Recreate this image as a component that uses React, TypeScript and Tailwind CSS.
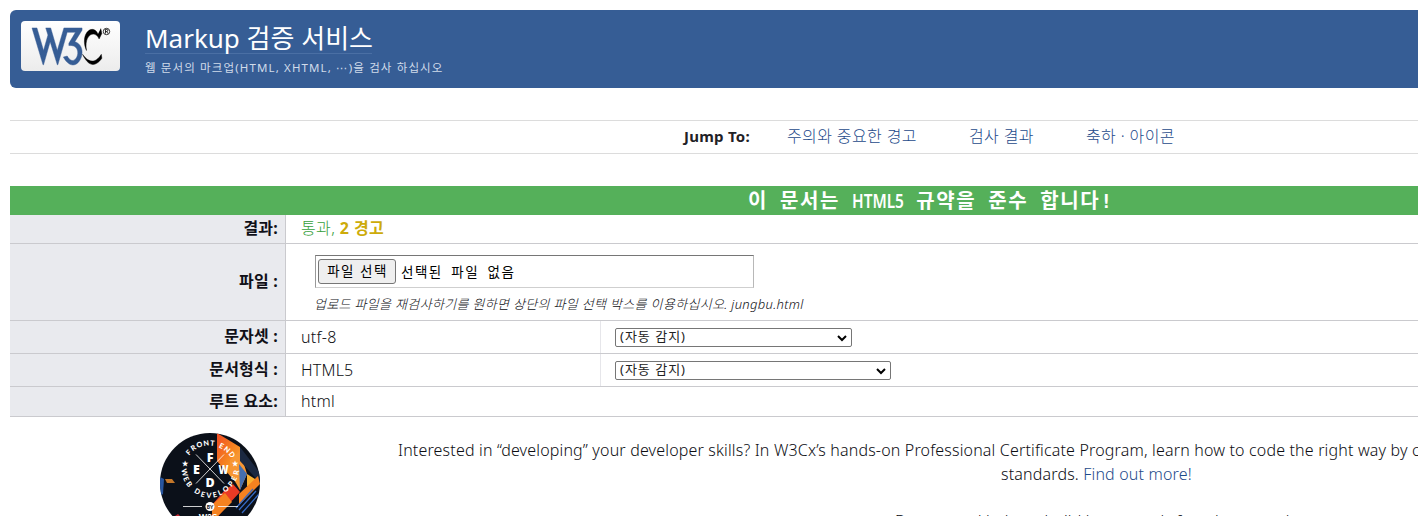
import React from "react";

const W3CLogo = () => (
  <svg className="block h-[50px] w-[99px] shrink-0" viewBox="0 0 99 50" aria-label="W3C">
    <defs>
      <linearGradient id="plate" x1="0" y1="0" x2="0" y2="1">
        <stop offset="0" stopColor="#fff" />
        <stop offset="1" stopColor="#ececec" />
      </linearGradient>
    </defs>
    <rect width="99" height="50" rx="4" fill="url(#plate)" />
    <g transform="translate(9.900 4.200) scale(.55)">
      <path fill="#365d95" stroke="#365d95" strokeWidth=".8" d="M36,5l12,41l12-41h33v4l-13,21c30,10,2,69-21,28l7-2c15,27,33,-22,3,-19v-4l12-20h-15l-17,59h-1l-13-42l-12,42h-1l-20-67h9l12,41l8-28l-4-13h9" />
      <path stroke="#000" strokeWidth=".8" d="M94,53c15,32,30,14,35,7l-1-7c-16,26-32,3-34,0M122,16c-10-21-34,0-21,30c-5-30 16,-38 23,-21l5-10l-2-9" />
    </g>
    <circle cx="85.500" cy="10.500" r="3.200" fill="none" stroke="#000" strokeWidth=".8" />
    <path d="M84.500 12.500v-4h1.300a1 1 0 0 1 0 2h-1.300m1.200 0l1.200 2" fill="none" stroke="#000" strokeWidth=".8" />
  </svg>
);

type Glyph = [string, number, number, number];
const ring: Glyph[] = [
  ["F", 188.500, 452.500, -46], ["R", 193.300, 447.800, -33], ["O", 199.300, 444.600, -20], ["N", 206.200, 443.200, -8], ["T", 212.500, 443.300, 6],
  ["E", 221.500, 446, 27], ["N", 227, 449.700, 40], ["D", 231.800, 454.600, 52],
  ["W", 184.600, 472.500, 76], ["E", 186.200, 479, 64], ["B", 189.300, 484.300, 54],
  ["D", 197.500, 491.500, 30], ["E", 203, 494.300, 16], ["V", 209, 495.300, 3], ["E", 214.800, 494.700, -10], ["L", 220, 492.700, -24], ["O", 225.800, 489, -38],
  ["P", 231, 484, -52], ["E", 234.200, 478.500, -65], ["R", 236.300, 472.500, -80],
];

const Badge = () => (
  <svg className="block h-[100px] w-[100px] shrink-0" viewBox="160 433 100 100">
    <defs>
      <clipPath id="disc"><circle cx="210" cy="483" r="50" /></clipPath>
      <linearGradient id="flame" x1="0" y1="0" x2="1" y2="1">
        <stop offset="0" stopColor="#f04a23" /><stop offset=".5" stopColor="#f58220" /><stop offset="1" stopColor="#fbb03b" />
      </linearGradient>
    </defs>
    <g clipPath="url(#disc)">
      <rect x="160" y="433" width="100" height="100" fill="#0b1019" />
      <path d="M160 477l4 2-1 15-3 2z" fill="#28559e" />
      <path d="M217 433l23 14v20l-8 11-15-17z" fill="url(#flame)" />
      <path d="M230 460l10-9 7 23-7 16-10-17z" fill="#f79633" />
      <path d="M239 464l8 10-7 16z" fill="#456fae" />
      <path d="M240 447l20 26v10l-20-22z" fill="#1b2840" />
      <path d="M247 474l8 5v10l-8-3z" fill="#f9b233" />
      <path d="M258 476l2 8-21 21v-11z" fill="#f58220" />
      <path d="M224 491l9-7 7 8-13 14-15 17v-18z" fill="#e93a25" />
      <path d="M212 505l13-12 7 9-20 20z" fill="#f58220" />
      <path d="M165 479h7l3 4h-8z" fill="#c4772a" />
      <path d="M239 510l17-19M242 513l17-19M236 508l17-19" stroke="#3569c2" strokeWidth="1.300" />
      <path d="M175 516l3-2 2 2z" fill="#c32630" />
    </g>
    <path d="M196 454.500l28 29M224 454.500l-28 29M183 506.500h19M218 506.500h20" stroke="#fff" strokeWidth=".8" />
    <g fill="#fff" textAnchor="middle" className="font-['Open_Sans'] text-[12.500px] font-extrabold">
      <text x="210" y="461.500">F</text><text x="196.500" y="473.500">E</text><text x="223.500" y="473.500" textLength="10" lengthAdjust="spacingAndGlyphs">W</text><text x="210" y="486.500">D</text>
    </g>
    <g fill="#fff" textAnchor="middle" className="font-['Lato'] text-[7.200px] font-black">
      {ring.map(([c, x, y, r], i) => (
        <text key={i} x={x} y={y + 2.5} transform={`rotate(${r} ${x} ${y})`}>{c}</text>
      ))}
      <text x="185" y="466">★</text><text x="235" y="466">★</text>
      <text x="210" y="520" className="text-[8px]">W3Cx</text>
    </g>
    <circle cx="210" cy="506.500" r="4.500" fill="#fff" />
    <text x="210" y="508.500" textAnchor="middle" fill="#10141d" className="font-['Lato'] text-[5px] font-black">BY</text>
  </svg>
);

const Arrow = () => (
  <svg className="h-[10px] w-[10px]" viewBox="0 0 10 10"><path d="M1 3l4 4 4-4" fill="none" stroke="#000" strokeWidth="2" /></svg>
);

const Select = ({ className }: { className: string }) => (
  <div className={`flex h-[19px] items-center justify-between rounded-[2px] border border-[#767676] pl-[4px] pr-[4px] ${className}`}>
    <span className="pb-[2px] text-[13px] leading-[15px] font-normal tracking-[1px] text-[#222]">(자동 감지)</span>
    <Arrow />
  </div>
);

const Label = ({ children }: { children: React.ReactNode }) => (
  <div className="flex w-[276px] shrink-0 items-center justify-end border-r border-[#cacace] bg-[#e9eaee] pr-[7px] pb-[2px] text-[16px] tracking-[0.200px] font-bold text-[#101018]">
    {children}
  </div>
);

export default function App() {
  return (
    <div className="h-[516px] w-[1418px] overflow-hidden bg-white pl-[10px] pt-[10px] font-['Noto_Sans','Noto_Sans_CJK_KR',sans-serif] text-[16px] font-light whitespace-nowrap text-[#0c0d12]">
      <header className="flex h-[78px] rounded-l-[6px] bg-[#365d95] pl-[11px] pt-[11px]">
        <W3CLogo />
        <div className="ml-[25px] text-white">
          <h1 className="h-[33px] w-[227px] border-b border-[#4a6fa4] text-[26px] leading-[34px] font-normal">Markup 검증 서비스</h1>
          <p className="mt-[5px] text-[11.500px] leading-[17px] font-normal tracking-[1.130px] text-[#d0dbea]">웹 문서의 마크업(HTML, XHTML, <span className="font-['DejaVu_Sans']">⋯</span>)을 검사 하십시오</p>
        </div>
      </header>

      <nav className="mt-[32px] flex h-[34px] items-center border-y border-[#dcdcdc] pb-[2px] pl-[674px] leading-[30px] tracking-[0.380px] text-[#1d4a8a]">
        <strong className="w-[103px] text-[15px] tracking-[0.250px] font-bold text-[#1f2126]">Jump To:</strong>
        <a className="w-[182px]">주의와 중요한 경고</a>
        <a className="w-[117px]">검사 결과</a>
        <a>축하 · 아이콘</a>
      </nav>

      <h2 className="mt-[32px] h-[29px] bg-[#55b05a] pl-[738px] font-['DejaVu_Sans_Mono','Noto_Sans_CJK_KR',monospace] text-[20px] leading-[30px] font-bold tracking-[1.600px] text-white [word-spacing:-1.600px]">
        이 문서는 <span className="inline-block w-[52px] origin-left scale-x-[0.770] font-['Noto_Sans'] font-semibold tracking-normal">HTML5</span> 규약을 준수 합니다!
      </h2>
      <div className="flex h-[29px] border-b border-[#cacace]">
        <Label>결과:</Label>
        <p className="pl-[15px] leading-[27px] tracking-[0.400px] text-[#36a03c]">통과, <b className="font-bold text-[#cdab0a]">2 경고</b></p>
      </div>
      <div className="flex h-[77px] border-b border-[#cacace]">
        <Label>파일 :</Label>
        <div className="pl-[29px] pt-[11px]">
          <div className="flex h-[33px] w-[439px] items-center border border-t-[#767676] border-r-[#b8b8b8] border-b-[#cfcfcf] border-l-[#999] pl-[2px] text-[13px] font-normal text-black">
            <span className="flex h-[25px] w-[78px] items-center justify-center rounded-[3px] border border-[#767676] bg-[#efefef] pl-px text-[13.500px] tracking-[1.500px]">파일 선택</span>
            <span className="ml-[5px] pt-[2px] text-[13.500px] tracking-[1.500px] [word-spacing:3.500px]">선택된 파일 없음</span>
          </div>
          <p className="-ml-px mt-[7px] text-[13px] leading-[18px] tracking-[0.320px] italic">업로드 파일을 재검사하기를 원하면 상단의 파일 선택 박스를 이용하십시오. jungbu.html</p>
        </div>
      </div>
      <div className="flex h-[33px] border-b border-[#cacace]">
        <Label>문자셋 :</Label>
        <p className="w-[315px] border-r border-[#e6e6ea] pl-[15px] leading-[32px] tracking-[0.300px]">utf-8</p>
        <Select className="mt-[7px] ml-[14px] w-[237px]" />
      </div>
      <div className="flex h-[33px] border-b border-[#cacace]">
        <Label>문서형식 :</Label>
        <p className="w-[315px] border-r border-[#e6e6ea] pl-[15px] leading-[32px] tracking-[0.200px]">HTML5</p>
        <Select className="mt-[7px] ml-[14px] w-[276px]" />
      </div>
      <div className="flex h-[30px] border-b border-[#cacace]">
        <Label>루트 요소:</Label>
        <p className="pl-[15px] leading-[28px] tracking-[0.200px]">html</p>
      </div>

      <section className="flex pl-[150px] pt-[16px]">
        <Badge />
        <div className="pl-[138px] pt-[5px] leading-[24px] tracking-[0.170px]">
          <p>Interested in “developing” your developer skills? In W3Cx’s hands-on Professional Certificate Program, learn how to code the right way by creating Web sites</p>
          <p className="pl-[603px]">standards. <a className="text-[#1d4a8a]">Find out more!</a></p>
          <p className="pl-[497px] pt-[23px]">Donate and help us build better tools for a better web.</p>
        </div>
      </section>
    </div>
  );
}
